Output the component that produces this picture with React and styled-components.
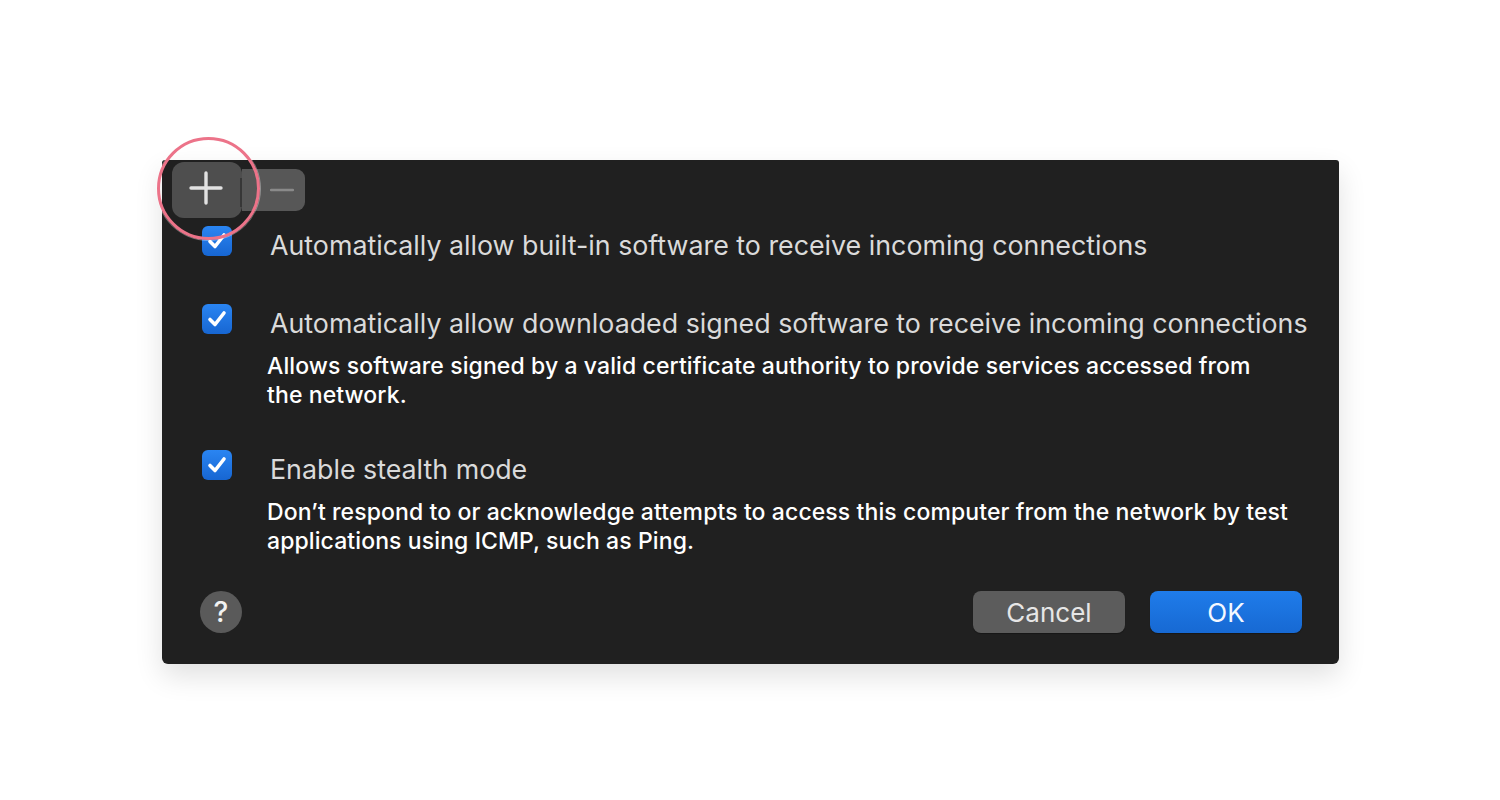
import React from 'react'
import styled, { createGlobalStyle } from 'styled-components'

const GlobalStyle = createGlobalStyle`
  body {
    margin: 0;
    background: #ffffff;
    font-family: Inter, "Noto Sans", sans-serif;
  }
`

const Page = styled.div`
  width: 1500px;
  height: 800px;
  padding-top: 160px;
  box-sizing: border-box;
`

const Sheet = styled.div`
  position: relative;
  width: 1177px;
  height: 504px;
  margin-left: 162px;
  background: #202020;
  border-radius: 3px 3px 6px 6px;
  box-shadow: 0 12px 28px rgba(0, 0, 0, 0.12);
  box-sizing: border-box;
  padding: 66px 37px 31px 40px;
  display: flex;
  flex-direction: column;
`

const Segmented = styled.div`
  position: absolute;
  left: 10px;
  top: 2px;
  height: 56px;
  display: flex;
  align-items: center;
  z-index: 2;
`

const PlusSegment = styled.div`
  position: relative;
  width: 70px;
  height: 56px;
  border-radius: 12px;
  background: #4e4e4e;
  display: flex;
  align-items: center;
  justify-content: center;
  padding-bottom: 4px;
  padding-right: 2px;
  box-sizing: border-box;

  &::after {
    content: '';
    position: absolute;
    right: 0;
    top: 16px;
    width: 2px;
    height: 29px;
    background: #373737;
  }
`

const MinusSegment = styled.div`
  width: 63px;
  height: 42px;
  border-radius: 0 9px 9px 0;
  background: #575757;
  display: flex;
  align-items: center;
  justify-content: center;
  padding-left: 16px;
  box-sizing: border-box;
`

const Highlight = styled.div`
  position: absolute;
  left: -5px;
  top: -23px;
  width: 103px;
  height: 103px;
  box-sizing: border-box;
  border: 3.5px solid #ec7389;
  border-radius: 50%;
  box-shadow: 0 0 0 1px rgba(255, 255, 255, 0.35);
  z-index: 3;
  pointer-events: none;
`

const Options = styled.div`
  display: flex;
  flex-direction: column;
  gap: 40px;
`

const Row = styled.div`
  display: grid;
  grid-template-columns: 30px 1fr;
  column-gap: 35px;
  align-items: start;
`

const Box = styled.div`
  width: 30px;
  height: 30px;
  border-radius: 6px;
  background: linear-gradient(#2a85f2, #1766d2);
  display: flex;
  align-items: center;
  justify-content: center;
`

const Text = styled.div`
  display: flex;
  flex-direction: column;
  min-width: 0;
`

const Label = styled.div`
  font-size: 26.8px;
  line-height: 38px;
  color: #dadada;
  margin-left: 3px;
  white-space: nowrap;
`

const Desc = styled.div`
  margin-top: 10px;
  font-size: 23px;
  line-height: 29px;
  letter-spacing: 0.1px;
  font-weight: 500;
  color: #ffffff;
  white-space: nowrap;
`

const Footer = styled.div`
  margin-top: auto;
  display: flex;
  align-items: center;
  gap: 25px;
`

const Help = styled.div`
  width: 42px;
  height: 42px;
  margin-left: -2px;
  border-radius: 50%;
  background: #5a5a5a;
  color: #f2f2f2;
  font-size: 28px;
  font-weight: 500;
  display: flex;
  align-items: center;
  justify-content: center;
  margin-right: auto;
`

const Button = styled.div`
  width: 152px;
  height: 42px;
  border-radius: 8px;
  background: ${p => (p.$primary ? 'linear-gradient(#1f7cea, #1769d3)' : '#5c5c5c')};
  color: ${p => (p.$primary ? '#f4f8ff' : '#e6e6e6')};
  font-size: 26px;
  display: flex;
  align-items: center;
  justify-content: center;
  box-shadow: 0 1px 1px rgba(0, 0, 0, 0.3);
`

const Check = () => (
  <svg width="22" height="22" viewBox="0 0 22 22">
    <path d="M4 11.5 L9 16.5 L18 5" fill="none" stroke="#fff" strokeWidth="3.6" strokeLinecap="round" strokeLinejoin="round" />
  </svg>
)

const options = [
  { label: 'Automatically allow built-in software to receive incoming connections' },
  {
    label: 'Automatically allow downloaded signed software to receive incoming connections',
    desc: ['Allows software signed by a valid certificate authority to provide services accessed from', 'the network.'],
  },
  {
    label: 'Enable stealth mode',
    desc: ['Don\u2019t respond to or acknowledge attempts to access this computer from the network by test', 'applications using ICMP, such as Ping.'],
  },
]

export default function App() {
  return (
    <Page>
      <GlobalStyle />
      <Sheet>
        <Segmented>
          <PlusSegment>
            <svg width="34" height="34" viewBox="0 0 34 34">
              <path d="M17 2 V32 M2 17 H32" stroke="#e2e2e2" strokeWidth="3.4" strokeLinecap="round" />
            </svg>
          </PlusSegment>
          <MinusSegment>
            <svg width="24" height="4" viewBox="0 0 24 4">
              <path d="M1 2 H23" stroke="#8a8a8a" strokeWidth="2.4" strokeLinecap="round" />
            </svg>
          </MinusSegment>
        </Segmented>
        <Highlight />
        <Options>
          {options.map(o => (
            <Row key={o.label}>
              <Box>
                <Check />
              </Box>
              <Text>
                <Label>{o.label}</Label>
                {o.desc && (
                  <Desc>
                    {o.desc[0]}
                    <br />
                    {o.desc[1]}
                  </Desc>
                )}
              </Text>
            </Row>
          ))}
        </Options>
        <Footer>
          <Help>?</Help>
          <Button>Cancel</Button>
          <Button $primary>OK</Button>
        </Footer>
      </Sheet>
    </Page>
  )
}
